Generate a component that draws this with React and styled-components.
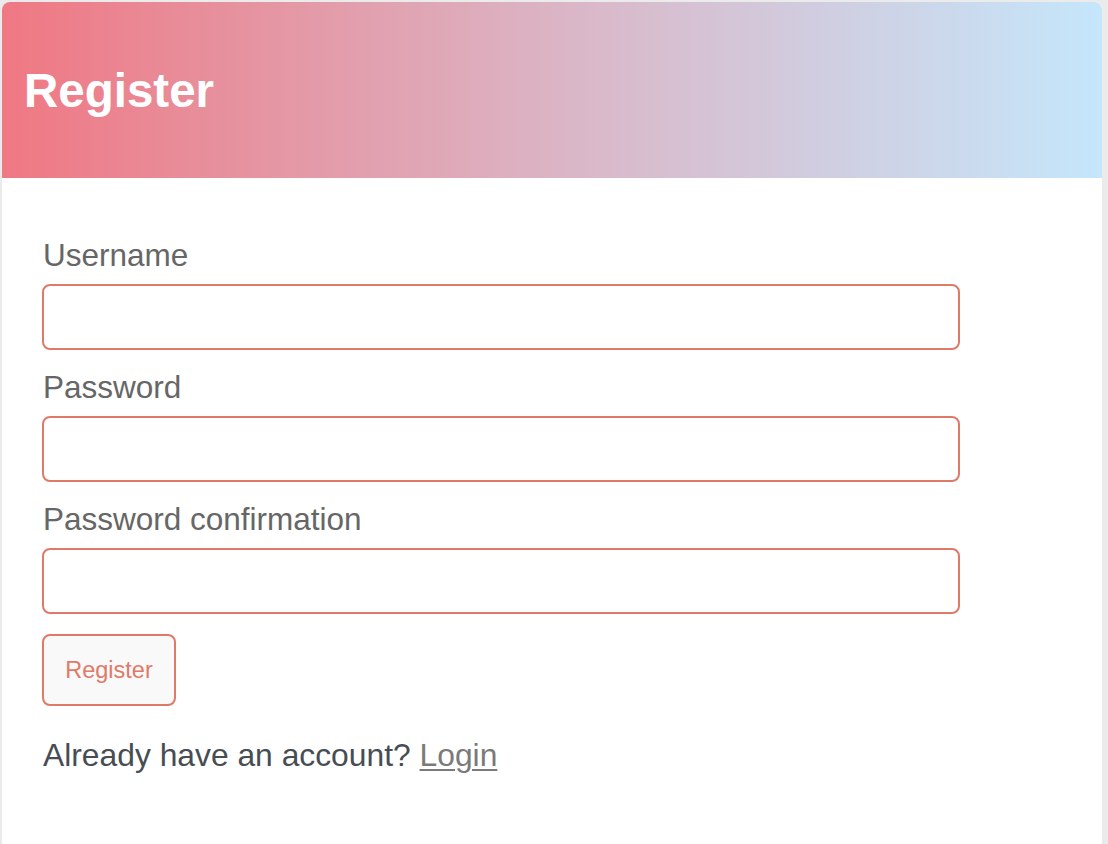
import React from "react";
import styled, { createGlobalStyle } from "styled-components";

const GlobalStyle = createGlobalStyle`
  html, body {
    margin: 0;
    padding: 0;
    background: #ebebeb;
  }
  body {
    font-family: "Liberation Sans", Arial, Helvetica, sans-serif;
  }
`;

const Page = styled.div`
  padding: 2px 6px 0 2px;
  height: 844px;
  box-sizing: border-box;
  overflow: hidden;
`;

const Card = styled.div`
  background: #fff;
  border-radius: 8px 8px 0 0;
  overflow: hidden;
  min-height: 842px;
`;

const Header = styled.header`
  height: 176px;
  display: flex;
  align-items: center;
  padding: 0 22px;
  background: linear-gradient(to right, #ef7883 0%, #d9bacb 55%, #c5e6fb 100%);
`;

const Title = styled.h1`
  margin: 0;
  color: #fff;
  font-size: 47.5px;
  font-weight: 700;
  line-height: 1;
  padding-top: 2px;
`;

const Body = styled.div`
  padding: 59px 40px 0 40px;
`;

const Form = styled.form`
  display: flex;
  flex-direction: column;
  align-items: flex-start;
`;

const Field = styled.div`
  display: flex;
  flex-direction: column;
  width: 918px;
  margin-bottom: ${(p) => (p.last ? "20px" : "19px")};
`;

const Label = styled.label`
  font-size: 31.5px;
  line-height: 37px;
  color: #666;
  margin-bottom: 10px;
  padding-left: 1px;
`;

const Input = styled.input`
  box-sizing: border-box;
  height: 66px;
  width: 100%;
  border: 2px solid #df7a69;
  border-radius: 8px;
  background: #fff;
  font-size: 24px;
  padding: 0 14px;
  outline: none;
`;

const Button = styled.button`
  box-sizing: border-box;
  width: 134px;
  height: 72px;
  border: 2px solid #df7a69;
  border-radius: 8px;
  background: #f9f9f9;
  color: #df7a69;
  font-family: inherit;
  font-size: 23.5px;
  cursor: pointer;
  margin-bottom: 31px;
`;

const Footer = styled.p`
  margin: 0;
  font-size: 31.8px;
  line-height: 37px;
  color: #474d53;
  padding-left: 1px;
`;

const LoginLink = styled.a`
  color: #7a7a7a;
  text-decoration: underline;
  text-underline-offset: 3px;
  text-decoration-thickness: 2px;
`;

const fields = [
  { id: "username", label: "Username", type: "text" },
  { id: "password", label: "Password", type: "password" },
  { id: "password_confirmation", label: "Password confirmation", type: "password" },
];

export default function App() {
  return (
    <>
      <GlobalStyle />
      <Page>
        <Card>
          <Header>
            <Title>Register</Title>
          </Header>
          <Body>
            <Form onSubmit={(e) => e.preventDefault()}>
              {fields.map((f, idx) => (
                <Field key={f.id} last={idx === fields.length - 1}>
                  <Label htmlFor={f.id}>{f.label}</Label>
                  <Input id={f.id} type={f.type} />
                </Field>
              ))}
              <Button type="submit">Register</Button>
            </Form>
            <Footer>
              Already have an account? <LoginLink href="#">Login</LoginLink>
            </Footer>
          </Body>
        </Card>
      </Page>
    </>
  );
}
